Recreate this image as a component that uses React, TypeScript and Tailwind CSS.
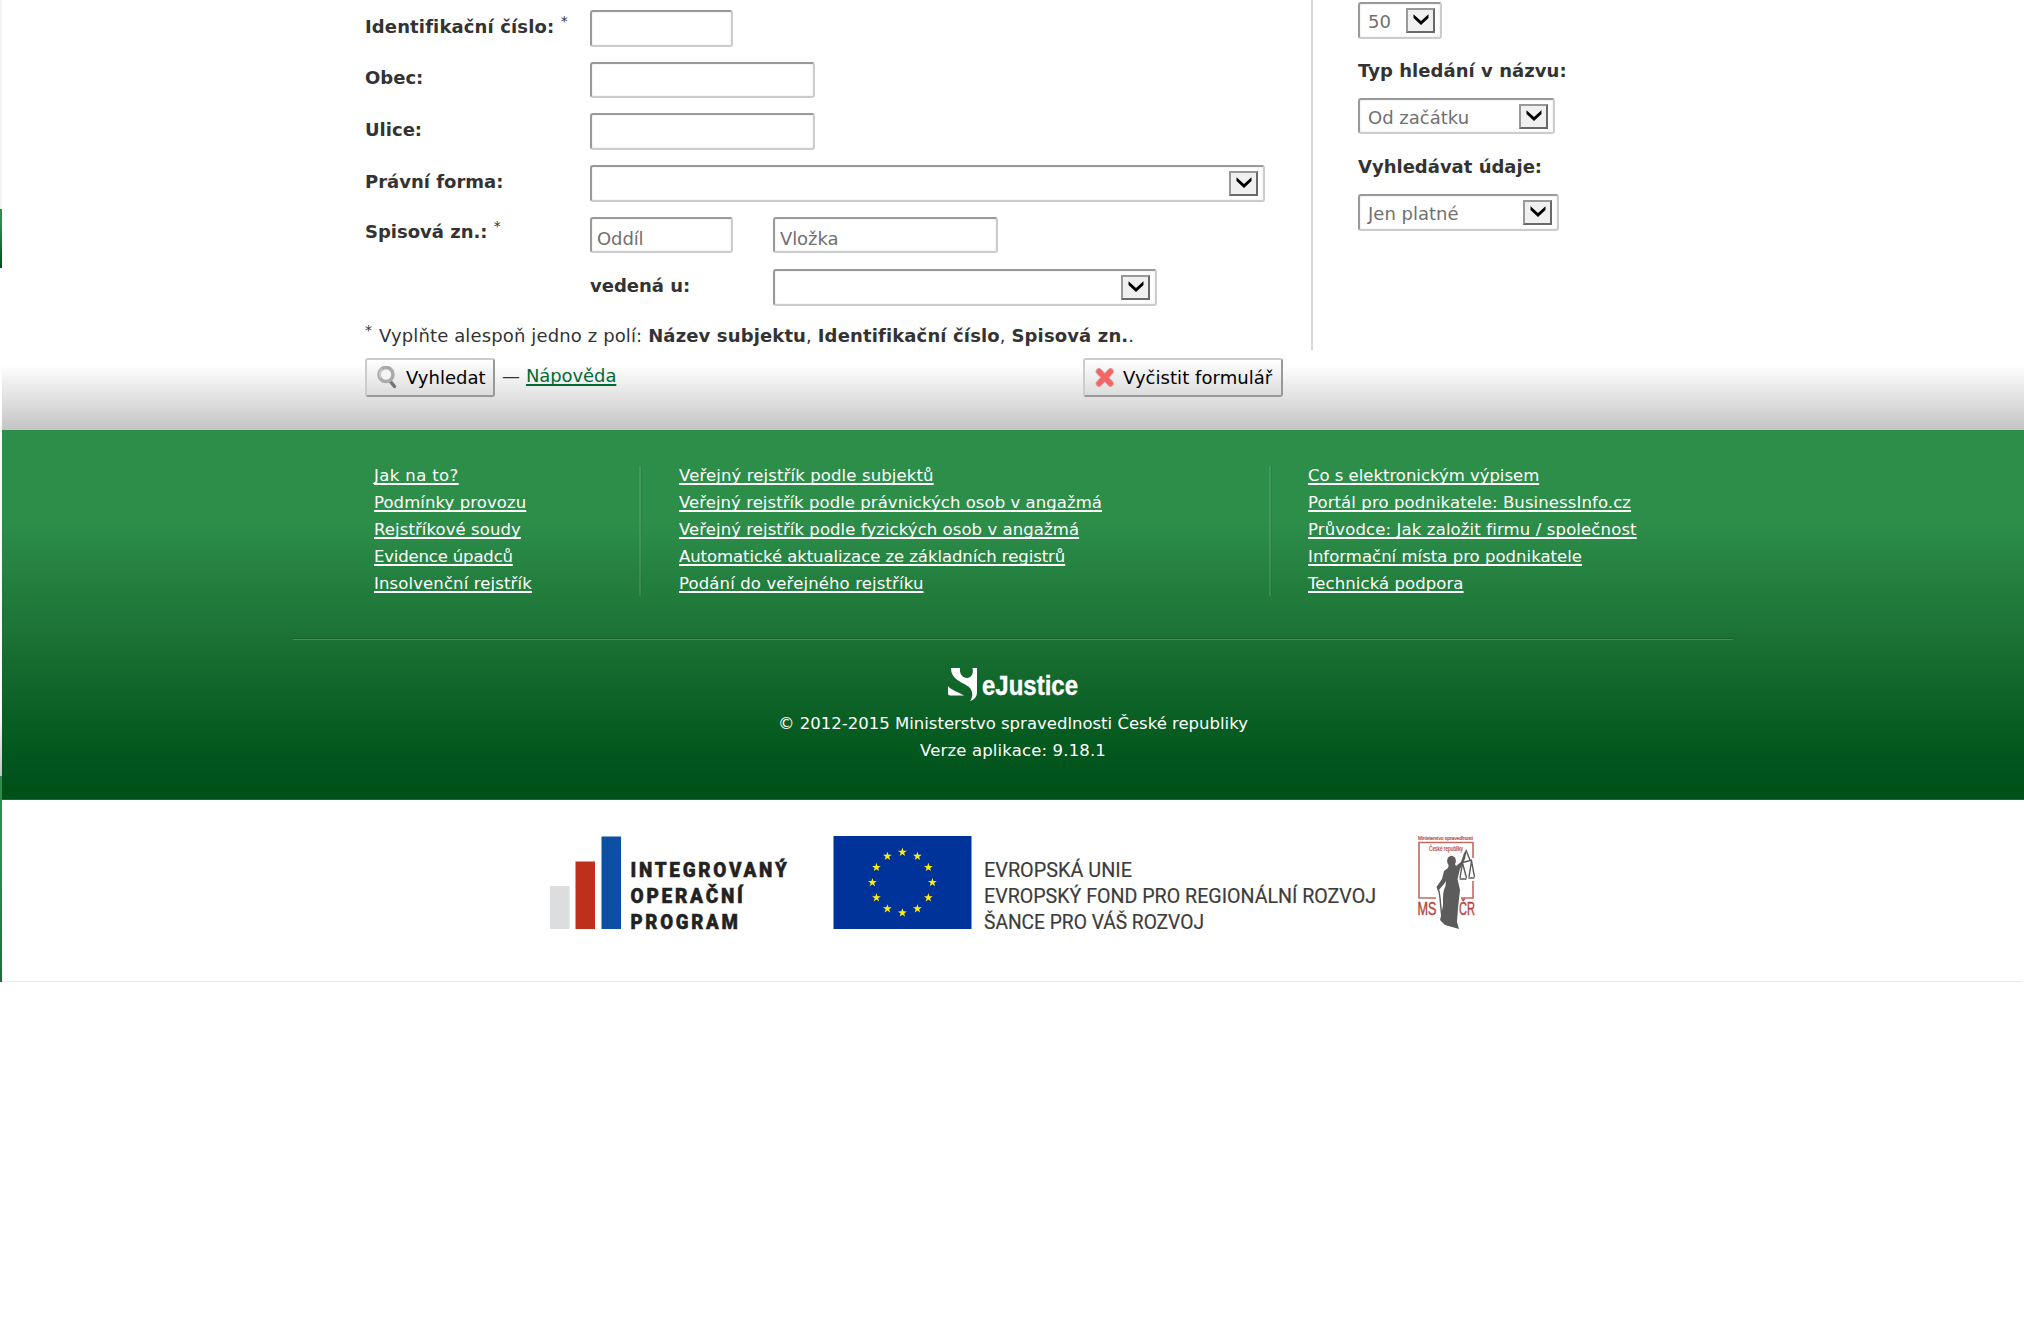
import React from "react";

const field =
  "box-border h-[36.5px] rounded-[3px] border-2 border-t-[#999] border-l-[#999] border-r-[#ccc] border-b-[#ccc] bg-white shadow-[inset_0_0_2px_#ddd] shrink-0";

function Field({ className, placeholder }: { className: string; placeholder?: string }) {
  return (
    <input
      type="text"
      placeholder={placeholder}
      className={`${field} px-[5px] pt-[7px] text-[18px] tracking-[-0.1px] text-[#666] placeholder:text-[#707070] ${className}`}
    />
  );
}

function Select({ className, value }: { className: string; value?: string }) {
  return (
    <div className={`${field} flex items-start justify-between pt-1 pr-[5px] pl-[8px] ${className}`}>
      <span className="pt-[3px] text-[18px] leading-[22px] whitespace-nowrap text-[#707070]">{value}</span>
      <span className="flex h-[25px] w-[29px] shrink-0 justify-center border-2 border-t-[#999] border-r-[#696969] border-b-[#696969] border-l-[#999] bg-[#f0f0f0]">
        <svg width="16" height="12" viewBox="0 0 16 12" className="mt-[4px]">
          <path d="M0.500 0.300V4L8 11L15.500 4V0.300L8 7Z" fill="#000" />
        </svg>
      </span>
    </div>
  );
}

function Star() {
  return <sup className="relative -top-[7px] align-baseline text-[14px] leading-none font-normal">*</sup>;
}

function Label({ children, className }: { children: React.ReactNode; className: string }) {
  return <div className={`shrink-0 text-[18px] leading-[22px] font-bold whitespace-nowrap ${className}`}>{children}</div>;
}

function Row({ children }: { children: React.ReactNode }) {
  return <div className="flex h-[51.7px] items-start">{children}</div>;
}

function FooterLinks({ links, className }: { links: [string, string][]; className: string }) {
  return (
    <div className={`h-[130px] ${className}`}>
      <ul className="-mt-[4px]">
        {links.map(([text, track]) => (
          <li key={text} className="h-[27px] leading-[27px] whitespace-nowrap">
            <a className={`underline decoration-2 underline-offset-[2px] [text-decoration-skip-ink:none] ${track}`}>{text}</a>
          </li>
        ))}
      </ul>
    </div>
  );
}

const STAR_POINTS = "0,-4.6 1.05,-1.45 4.4,-1.4 1.75,0.6 2.7,3.75 0,1.85 -2.7,3.75 -1.75,0.6 -4.4,-1.4 -1.05,-1.45";

export default function App() {
  return (
    <div className="flex h-[1329px] w-[2024px] overflow-hidden bg-white font-['DejaVu_Sans',sans-serif] text-[#333]">
      <div className="w-[2px] shrink-0">
        <div className="h-[209px] bg-[#f3f3f3]" />
        <div className="h-[59px] bg-linear-to-b from-[#2d8e4a] from-25% to-[#00501a]" />
        <div className="h-[443px]" />
        <div className="h-[65px] bg-linear-to-b from-white to-[#c4c4c4]" />
        <div className="h-[206px] bg-linear-to-b from-[#2d8e4a] from-40% to-[#1a7033]" />
      </div>
      <div className="w-[2022px]">
        <main className="h-[430px] bg-[linear-gradient(to_bottom,#fff_365px,#c4c4c4_430px)] pl-[363px]">
          <div className="flex h-[350px]">
            <div className="w-[948px] border-r-2 border-[#d8d8d8] pt-[10px]">
              <Row>
                <Label className="mt-[6px] w-[225px] tracking-[0.13px]">Identifikační číslo: <Star /></Label>
                <Field className="w-[143px]" />
              </Row>
              <Row>
                <Label className="mt-[5px] w-[225px]">Obec:</Label>
                <Field className="w-[225px]" />
              </Row>
              <Row>
                <Label className="mt-[6px] w-[225px]">Ulice:</Label>
                <Field className="w-[225px]" />
              </Row>
              <Row>
                <Label className="mt-[6px] w-[225px]">Právní forma:</Label>
                <Select className="w-[675px]" />
              </Row>
              <Row>
                <Label className="mt-[4px] w-[225px]">Spisová zn.: <Star /></Label>
                <Field className="mr-[40px] w-[143px]" placeholder="Oddíl" />
                <Field className="w-[225px]" placeholder="Vložka" />
              </Row>
              <Row>
                <Label className="mt-[7px] ml-[225px] w-[183px]">vedená u:</Label>
                <Select className="mt-px w-[384px]" />
              </Row>
              <p className="mt-[5px] text-[18px] leading-[22px] tracking-[0.13px] whitespace-nowrap">
                <Star /> <span className="ml-px">Vyplňte alespoň jedno z polí: </span><b>Název subjektu</b>, <b>Identifikační číslo</b>, <b>Spisová zn.</b>.
              </p>
            </div>
            <div className="pt-[2px] pl-[45px]">
              <Select className="w-[84px]" value="50" />
              <Label className="mt-[21px] mb-[16px] tracking-[0.05px]">Typ hledání v názvu:</Label>
              <Select className="w-[197px]" value="Od začátku" />
              <Label className="mt-[22px] mb-[16px]">Vyhledávat údaje:</Label>
              <Select className="w-[201px]" value="Jen platné" />
            </div>
          </div>
          <div className="flex w-[918px] items-start pt-[8px] text-[18px] leading-[22px]">
            <button className="flex h-[39px] w-[130px] items-center rounded-[3px] border-2 border-t-[#ccc] border-r-[#999] border-b-[#999] border-l-[#ccc] bg-linear-to-b from-white to-[#dcdcdc] pl-[9px] text-black">
              <svg width="22" height="24" viewBox="0 0 22 24" className="mr-[8px] shrink-0">
                <path d="M14 15L18.500 20.500" stroke="#777" strokeWidth="3.500" strokeLinecap="round" />
                <circle cx="10" cy="8.500" r="7" fill="#f4f4f4" stroke="#aaa" strokeWidth="3.600" />
                <path d="M5 12A7 7 0 0 1 6 3" fill="none" stroke="#c8c8c8" strokeWidth="2" />
              </svg>
              Vyhledat
            </button>
            <span className="mt-[7px] ml-[7px] flex whitespace-nowrap">
              —
              <a className="ml-[6px] tracking-[-0.1px] text-[#006b35] underline decoration-2 underline-offset-[2px] [text-decoration-skip-ink:none]">Nápověda</a>
            </span>
            <button className="ml-auto flex h-[39px] w-[200px] items-center rounded-[3px] border-2 border-t-[#ccc] border-r-[#999] border-b-[#999] border-l-[#ccc] bg-linear-to-b from-white to-[#dcdcdc] pl-[9px] tracking-[0.05px] whitespace-nowrap text-black">
              <svg width="22" height="22" viewBox="0 0 22 22" className="mr-[7px] shrink-0">
                <path d="M5 4.500L16.500 16.500M16.500 4.500L5 16.500" stroke="#d9a0a0" strokeWidth="6.600" strokeLinecap="round" />
                <path d="M5 4.500L16.500 16.500M16.500 4.500L5 16.500" stroke="#f66464" strokeWidth="5" strokeLinecap="round" />
              </svg>
              Vyčistit formulář
            </button>
          </div>
        </main>

        <footer className="h-[370px] border-b border-[#1a6b36] bg-[linear-gradient(to_bottom,#2d8e4a_0,#2d8e4a_90px,#1a7033_215px,#045a1f_310px,#00501a_360px)] text-[16.5px] text-white">
          <div className="mx-auto flex h-[210px] w-[1440px] border-b border-white/20 pt-[36px] shadow-[inset_0_-2px_0_-1px_rgba(0,0,0,.15)]">
            <FooterLinks
              className="w-[267px] pl-[81px]"
              links={[
                ["Jak na to?", "tracking-[0.38px]"],
                ["Podmínky provozu", "tracking-[0.08px]"],
                ["Rejstříkové soudy", "tracking-[0.08px]"],
                ["Evidence úpadců", "tracking-[-0.17px]"],
                ["Insolvenční rejstřík", "tracking-[0.12px]"],
              ]}
            />
            <FooterLinks
              className="ml-[79px] w-[630px] border-l-2 border-white/10 pl-[38px] shadow-[inset_1px_0_0_rgba(0,0,0,0.06)]"
              links={[
                ["Veřejný rejstřík podle subjektů", "tracking-[0.12px]"],
                ["Veřejný rejstřík podle právnických osob v angažmá", "tracking-[0.05px]"],
                ["Veřejný rejstřík podle fyzických osob v angažmá", "tracking-[0.07px]"],
                ["Automatické aktualizace ze základních registrů", "tracking-[-0.07px]"],
                ["Podání do veřejného rejstříku", "tracking-[0.13px]"],
              ]}
            />
            <FooterLinks
              className="border-l-2 border-white/10 pl-[37px] shadow-[inset_1px_0_0_rgba(0,0,0,0.06)]"
              links={[
                ["Co s elektronickým výpisem", "tracking-[-0.02px]"],
                ["Portál pro podnikatele: BusinessInfo.cz", "tracking-[0.1px]"],
                ["Průvodce: Jak založit firmu / společnost", "tracking-[0.13px]"],
                ["Informační místa pro podnikatele", "tracking-[0.02px]"],
                ["Technická podpora", "tracking-[0.08px]"],
              ]}
            />
          </div>
          <div className="flex flex-col items-center pt-[27px] leading-[27px]">
            <svg width="130" height="34" viewBox="0 0 130 34" className="mb-[9px] overflow-visible" fill="#fff">
              <path d="M3 1H12C11 7 15 11 19 11C23 11 26 7 24.500 1H29V25C29 30 26 33 22 34C25 30 25 25 22 21C18 16 3 14 3 1Z" />
              <path d="M0 19C3 23 10 25 16 28.500H2Q0 28.500 0 26Z" />
              <text x="34" y="28" fontFamily="Liberation Sans" fontWeight="700" fontSize="28" stroke="#fff" strokeWidth="0.400" textLength="96" lengthAdjust="spacingAndGlyphs">eJustice</text>
            </svg>
            <p>© 2012-2015 Ministerstvo spravedlnosti České republiky</p>
            <p className="tracking-[0.15px]">Verze aplikace: 9.18.1</p>
          </div>
        </footer>

        <section className="flex h-[182px] w-[2020px] border-b border-[#e4ebe8] pt-[36px] pl-[548px]">
          <svg width="240" height="94" viewBox="0 0 240 94" className="mr-[43px] overflow-visible">
            <rect x="0" y="50" width="19.500" height="43" fill="#dcddde" />
            <rect x="25.500" y="25.500" width="19.500" height="67.500" fill="#be2f1c" />
            <rect x="51.500" y="0.500" width="19.500" height="92.500" fill="#0d4fa3" />
            <g fontFamily="Roboto" fontWeight="900" fontSize="21" fill="#222" stroke="#222" strokeWidth="0.500">
              <text x="80.500" y="41" letterSpacing="3" textLength="159" lengthAdjust="spacingAndGlyphs">INTEGROVANÝ</text>
              <text x="80.500" y="66.500" letterSpacing="3" textLength="115" lengthAdjust="spacingAndGlyphs">OPERAČNÍ</text>
              <text x="80.500" y="92.500" letterSpacing="3" textLength="110" lengthAdjust="spacingAndGlyphs">PROGRAM</text>
            </g>
          </svg>
          <svg width="545" height="94" viewBox="0 0 545 94" className="mr-[40px] overflow-visible">
            <rect x="0.500" width="138" height="93" fill="#039" />
            {Array.from({ length: 12 }, (_, i) => {
              const a = (i * Math.PI) / 6;
              return (
                <polygon
                  key={i}
                  points={STAR_POINTS}
                  fill="#ffee08"
                  transform={`translate(${69.4 + 30 * Math.sin(a)} ${46.5 - 30.3 * Math.cos(a)})`}
                />
              );
            })}
            <g fontFamily="Roboto" fontWeight="400" fontSize="20.800" fill="#3c3c3c" stroke="#3c3c3c" strokeWidth="0.200">
              <text x="151" y="41" textLength="148" lengthAdjust="spacingAndGlyphs">EVROPSKÁ UNIE</text>
              <text x="151" y="66.500" textLength="392" lengthAdjust="spacingAndGlyphs">EVROPSKÝ FOND PRO REGIONÁLNÍ ROZVOJ</text>
              <text x="151" y="92.500" textLength="220" lengthAdjust="spacingAndGlyphs">ŠANCE PRO VÁŠ ROZVOJ</text>
            </g>
          </svg>
          <svg width="58" height="94" viewBox="0 0 58 94" className="overflow-visible">
            <g fontFamily="Liberation Sans" fill="#b5463c">
              <text x="0" y="4" fontSize="5.500" textLength="55" lengthAdjust="spacingAndGlyphs" stroke="#b5463c" strokeWidth="0.200">Ministerstvo spravedlnosti</text>
              <text x="11" y="14.500" fontSize="7" textLength="34" lengthAdjust="spacingAndGlyphs" stroke="#b5463c" strokeWidth="0.200">České republiky</text>
              <text x="-0.500" y="79" fontSize="17.500" textLength="19" lengthAdjust="spacingAndGlyphs" stroke="#b5463c" strokeWidth="0.400">MS</text>
              <text x="41" y="79" fontSize="17.500" textLength="16" lengthAdjust="spacingAndGlyphs" stroke="#b5463c" strokeWidth="0.400">ČR</text>
            </g>
            <path d="M18 62H1V6.500H55V22M55 45V62H43" fill="none" stroke="#c06a62" strokeWidth="1.600" />
            <g fill="#5c5c5c">
              <ellipse cx="33.500" cy="25" rx="4.400" ry="5.200" />
              <path d="M31 28L30 32L26 35L24 43L18.500 51L20 55L26 48L28 45L27.500 50C24.500 56 25 62 25 69L23 80L22 84L27 89L34 91L41 93L39 86L40 72L42 54L39.500 43L42 33L47 23L49 13L46 17L43 26L38 30L37 28Z" />
            </g>
            <path d="M20 52C23 60 22 70 24 81M48 14L52 24M43 27L54 24M44.500 27L42 42M44.500 27L48.500 42M53.500 25L51 41M53.500 25L56.500 41M41.500 43H48.500M50.500 42H56.500" fill="none" stroke="#5c5c5c" strokeWidth="1.400" />
          </svg>
        </section>
      </div>
    </div>
  );
}
